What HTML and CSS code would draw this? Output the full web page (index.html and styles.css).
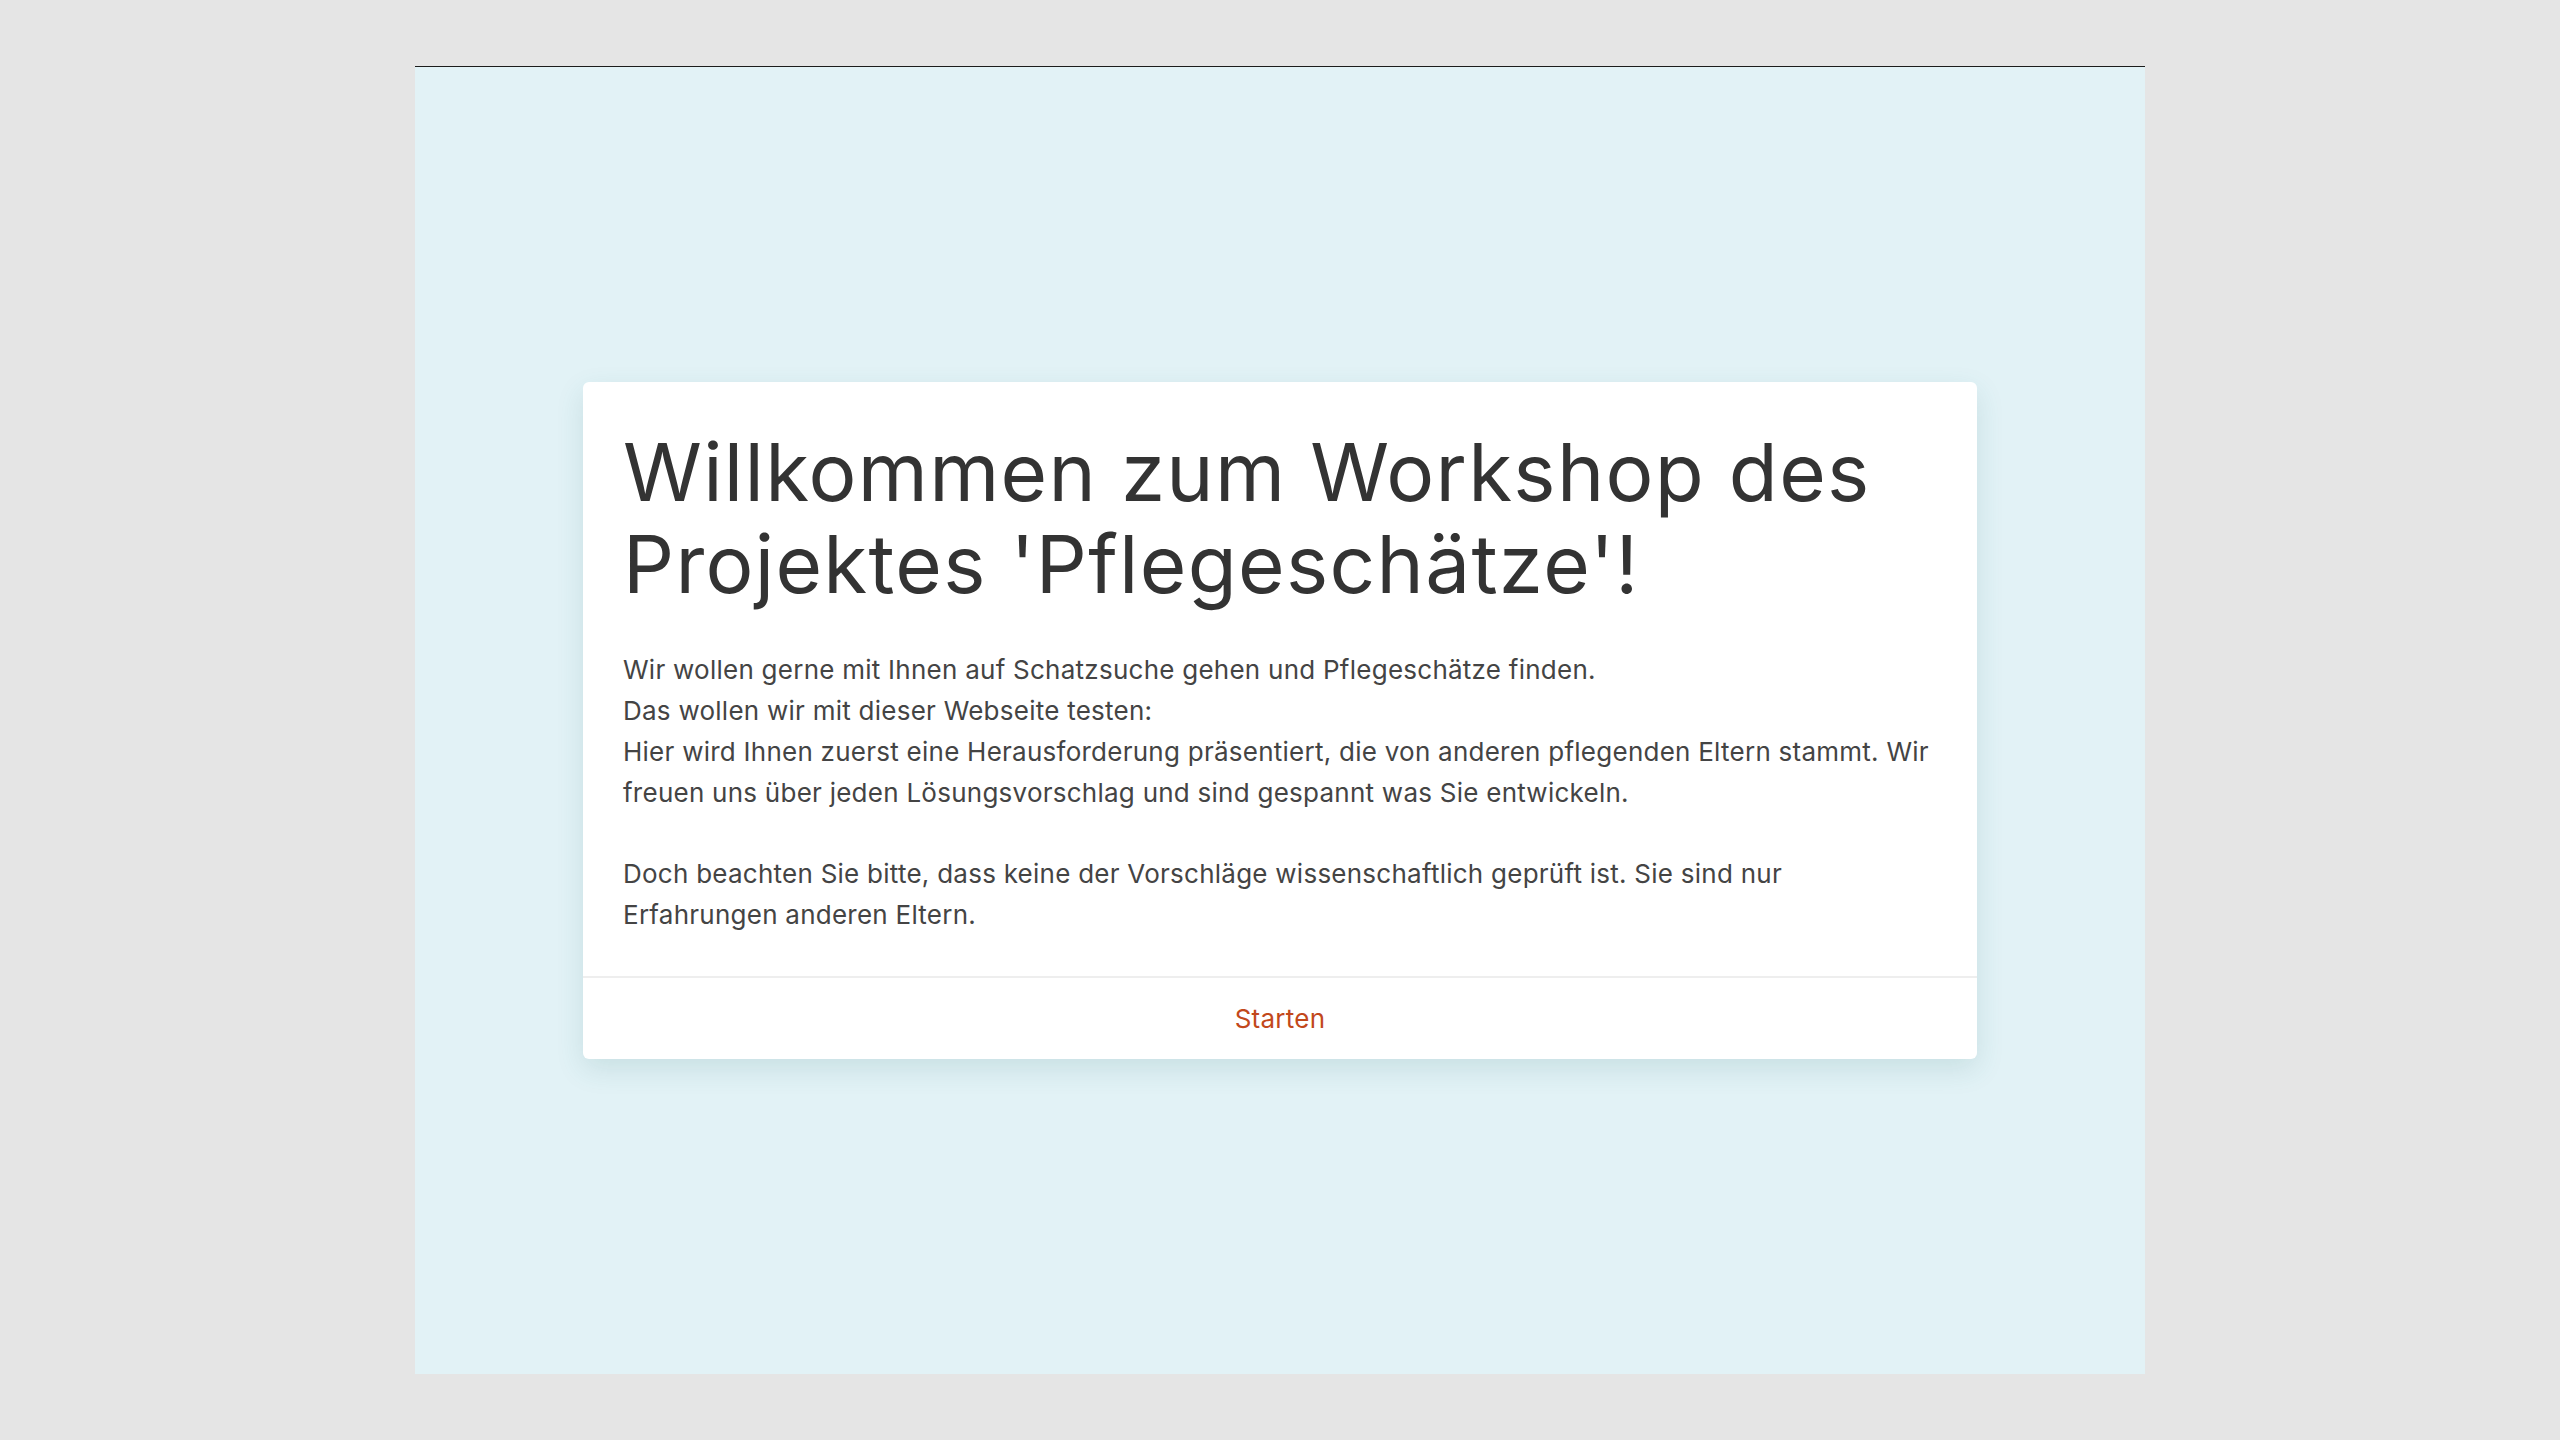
FILE: index.html
```html
<!DOCTYPE html>
<html lang="de">
<head>
<meta charset="utf-8">
<title>Pflegeschätze Workshop</title>
<link rel="stylesheet" href="styles.css">
</head>
<body>
<main class="panel">
  <section class="card">
    <div class="card-body">
      <h1 class="title">Willkommen zum Workshop des Projektes 'Pflegeschätze'!</h1>
      <p class="text">Wir wollen gerne mit Ihnen auf Schatzsuche gehen und Pflegeschätze finden.<br>Das wollen wir mit dieser Webseite testen:<br>Hier wird Ihnen zuerst eine Herausforderung präsentiert, die von anderen pflegenden Eltern stammt. Wir freuen uns über jeden Lösungsvorschlag und sind gespannt was Sie entwickeln.<br><br>Doch beachten Sie bitte, dass keine der Vorschläge wissenschaftlich geprüft ist. Sie sind nur Erfahrungen anderen Eltern.</p>
    </div>
    <div class="card-footer">
      <button class="start" type="button">Starten</button>
    </div>
  </section>
</main>
</body>
</html>
```
FILE: styles.css
```css
html, body {
  margin: 0;
  padding: 0;
}
body {
  background: #e5e5e5;
  min-height: 100vh;
  display: flex;
  align-items: center;
  justify-content: center;
  font-family: "Inter", "Noto Sans", sans-serif;
}
.panel {
  width: 1730px;
  height: 1307px;
  background: #e2f2f6;
  border-top: 1px solid #1c1c1c;
  display: flex;
  align-items: center;
  justify-content: center;
}
.card {
  width: 1394px;
  background: #ffffff;
  border-radius: 6px;
  box-shadow: 0 10px 28px rgba(40, 110, 110, 0.14);
  display: flex;
  flex-direction: column;
}
.card-body {
  padding: 44px 40px 40px;
}
.title {
  margin: 0 0 40px;
  font-size: 80px;
  line-height: 92px;
  font-weight: 400;
  color: #333333;
  letter-spacing: 1.3px;
}
.text {
  margin: 0;
  font-size: 26px;
  line-height: 40.8px;
  color: #444444;
  letter-spacing: 0.25px;
}
.card-footer {
  border-top: 2px solid #eeeeee;
  display: flex;
  justify-content: center;
  padding: 21px 0 20px;
}
.start {
  background: none;
  border: none;
  padding: 0;
  font-family: inherit;
  font-size: 26px;
  line-height: 40px;
  letter-spacing: 0.25px;
  color: #c2481b;
  cursor: pointer;
}
```
